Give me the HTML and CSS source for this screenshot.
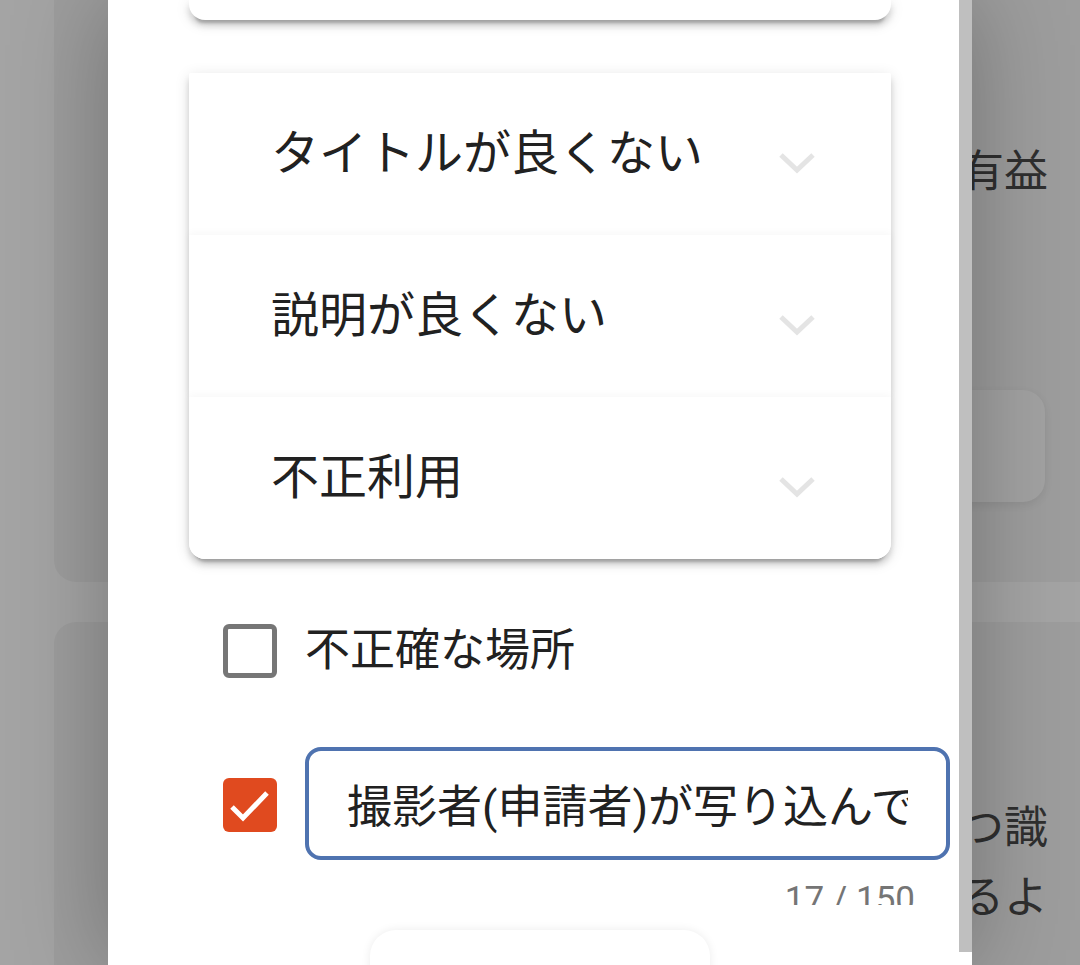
FILE: index.html
```html
<!DOCTYPE html>
<html lang="ja">
<head>
<meta charset="utf-8">
<title>報告</title>
<link rel="stylesheet" href="styles.css">
</head>
<body>
<div class="page">
  <div class="bgcard c1">
    <p class="bgtext first">この写真は有益</p>
    <div class="bgbtn"></div>
  </div>
  <div class="bgcard c2">
    <p class="bgtext second">場所が特定でき、かつ識</p>
    <p class="bgtext">別できるよ</p>
  </div>
</div>

<div class="modal">
  <div class="scroll">
    <div class="topcard"></div>
    <div class="panels">
      <div class="panel">
        <span class="panel-title">タイトルが良くない</span>
        <svg class="chev" width="38" height="24" viewBox="0 0 38 24"><polyline points="3,4 19,19 35,4" fill="none" stroke="#e4e4e4" stroke-width="5"/></svg>
      </div>
      <div class="panel">
        <span class="panel-title">説明が良くない</span>
        <svg class="chev" width="38" height="24" viewBox="0 0 38 24"><polyline points="3,4 19,19 35,4" fill="none" stroke="#e4e4e4" stroke-width="5"/></svg>
      </div>
      <div class="panel last">
        <span class="panel-title">不正利用</span>
        <svg class="chev" width="38" height="24" viewBox="0 0 38 24"><polyline points="3,4 19,19 35,4" fill="none" stroke="#e4e4e4" stroke-width="5"/></svg>
      </div>
    </div>

    <div class="check-row first-check">
      <span class="box"></span>
      <span class="check-label">不正確な場所</span>
    </div>

    <div class="check-row other">
      <span class="box checked">
        <svg width="54" height="54" viewBox="0 0 54 54"><polyline points="9,29 20,40 44,15" fill="none" stroke="#ffffff" stroke-width="5"/></svg>
      </span>
      <div class="field">
        <input class="text-input" type="text" value="撮影者(申請者)が写り込んでいる。">
        <div class="counter">17 / 150</div>
      </div>
    </div>
  </div>
  <div class="footer">
    <div class="action"></div>
  </div>
  <div class="scrollbar"></div>
</div>
</body>
</html>
```
FILE: styles.css
```css
html, body {
  margin: 0;
  padding: 0;
}
body {
  width: 1080px;
  height: 965px;
  overflow: hidden;
  background: #a4a4a4;
  font-family: Roboto, "Noto Sans CJK JP", sans-serif;
  position: relative;
}
.page {
  padding-left: 54px;
}
.bgcard {
  width: 1060px;
  background: #9d9d9d;
  box-sizing: border-box;
  display: flex;
  flex-direction: column;
  align-items: flex-end;
  padding-right: 66px;
}
.c1 {
  height: 602px;
  margin-top: -20px;
  border-radius: 0 0 22px 22px;
  padding-top: 162px;
}
.c2 {
  height: 420px;
  margin-top: 40px;
  border-radius: 22px 22px 0 0;
  padding-top: 171px;
}
.bgtext {
  margin: 0;
  font-size: 44px;
  line-height: 70px;
  color: #2f2f2f;
  white-space: nowrap;
}
.first {
  line-height: 60px;
}
.bgbtn {
  margin-top: 188px;
  margin-right: 3px;
  width: 200px;
  height: 112px;
  border-radius: 22px;
  background: #a2a2a2;
  box-shadow: 0 3px 8px rgba(0, 0, 0, 0.08);
}

.modal {
  position: absolute;
  left: 108px;
  top: 0;
  width: 864px;
  height: 965px;
  background: #ffffff;
  box-shadow: 0 0 90px rgba(0, 0, 0, 0.28);
  display: flex;
  flex-direction: column;
}
.scrollbar {
  position: absolute;
  right: 0;
  top: 0;
  width: 13px;
  height: 952px;
  background: #bfbfbf;
}
.scroll {
  height: 905px;
  overflow: hidden;
  padding-left: 81px;
  flex: none;
}
.topcard {
  width: 702px;
  height: 20px;
  background: #fff;
  border-radius: 0 0 16px 16px;
  box-shadow: 0 9px 3px -6px rgba(0,0,0,.2), 0 6px 6px rgba(0,0,0,.14), 0 3px 15px rgba(0,0,0,.12);
}
.panels {
  margin-top: 53px;
  width: 702px;
  border-radius: 2px 2px 16px 16px;
  background: #fff;
  box-shadow: 0 9px 3px -6px rgba(0,0,0,.2), 0 6px 6px rgba(0,0,0,.14), 0 3px 15px rgba(0,0,0,.12);
}
.panel {
  position: relative;
  height: 162px;
  box-sizing: border-box;
  padding-left: 82px;
  padding-right: 75px;
  display: flex;
  align-items: center;
  justify-content: space-between;
  background: #fff;
  box-shadow: 0 -2px 8px rgba(0, 0, 0, 0.035);
}
.panel:first-child {
  box-shadow: none;
  border-radius: 2px 2px 0 0;
}
.panel.last {
  border-radius: 0 0 16px 16px;
}
.panel-title {
  font-size: 48px;
  line-height: 60px;
  color: #212121;
  margin-bottom: 0;
}
.chev {
  display: block;
  margin-top: 18px;
}

.check-row {
  display: flex;
  align-items: center;
  padding-left: 34px;
  gap: 28px;
}
.first-check {
  margin-top: 65px;
}
.other {
  margin-top: 69px;
  align-items: flex-start;
}
.box {
  width: 54px;
  height: 54px;
  box-sizing: border-box;
  border: 5px solid #767676;
  border-radius: 6px;
  flex: none;
  display: block;
}
.box.checked {
  border: none;
  background: #e04a1f;
  margin-top: 31px;
}
.box.checked svg {
  display: block;
}
.check-label {
  font-size: 45px;
  line-height: 54px;
  color: #212121;
}
.field {
  width: 645px;
}
.text-input {
  display: block;
  width: 100%;
  height: 113px;
  box-sizing: border-box;
  border: 4px solid #4f73b0;
  border-radius: 16px;
  padding: 0 38px;
  margin: 0;
  font-family: Roboto, "Noto Sans CJK JP", sans-serif;
  font-size: 45px;
  color: #212121;
  background: #fff;
  outline: none;
}
.counter {
  margin-top: 20px;
  padding-right: 35px;
  text-align: right;
  font-size: 35px;
  line-height: 40px;
  color: #757575;
}
.footer {
  padding-top: 25px;
  padding-left: 262px;
}
.action {
  width: 340px;
  height: 80px;
  border-radius: 26px;
  background: #fff;
  box-shadow: 0 0 10px rgba(0, 0, 0, 0.08);
}
```
